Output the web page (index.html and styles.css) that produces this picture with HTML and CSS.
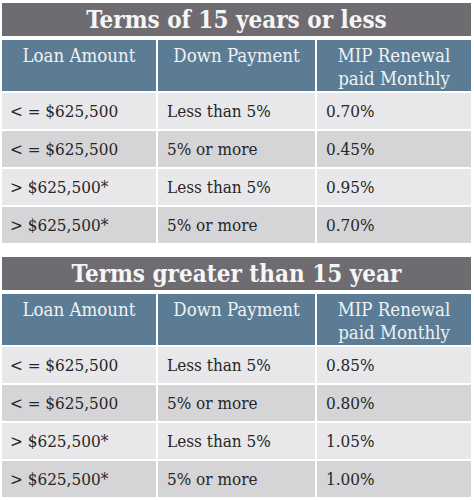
FILE: index.html
```html
<!DOCTYPE html>
<html>
<head>
<meta charset="utf-8">
<link rel="stylesheet" href="styles.css">
</head>
<body>
<div class="page">
  <section class="block">
    <div class="title">Terms of 15 years or less</div>
    <div class="grid">
      <div class="hd">Loan Amount</div>
      <div class="hd">Down Payment</div>
      <div class="hd">MIP Renewal<br>paid Monthly</div>
      <div class="c l">&lt; = $625,500</div>
      <div class="c l">Less than 5%</div>
      <div class="c l">0.70%</div>
      <div class="c d">&lt; = $625,500</div>
      <div class="c d">5% or more</div>
      <div class="c d">0.45%</div>
      <div class="c l">&gt; $625,500*</div>
      <div class="c l">Less than 5%</div>
      <div class="c l">0.95%</div>
      <div class="c d">&gt; $625,500*</div>
      <div class="c d">5% or more</div>
      <div class="c d">0.70%</div>
    </div>
  </section>
  <section class="block second">
    <div class="title">Terms greater than 15 year</div>
    <div class="grid">
      <div class="hd">Loan Amount</div>
      <div class="hd">Down Payment</div>
      <div class="hd">MIP Renewal<br>paid Monthly</div>
      <div class="c l">&lt; = $625,500</div>
      <div class="c l">Less than 5%</div>
      <div class="c l">0.85%</div>
      <div class="c d">&lt; = $625,500</div>
      <div class="c d">5% or more</div>
      <div class="c d">0.80%</div>
      <div class="c l">&gt; $625,500*</div>
      <div class="c l">Less than 5%</div>
      <div class="c l">1.05%</div>
      <div class="c d">&gt; $625,500*</div>
      <div class="c d">5% or more</div>
      <div class="c d">1.00%</div>
    </div>
  </section>
</div>
</body>
</html>
```
FILE: styles.css
```css
html, body {
  margin: 0;
  padding: 0;
  background: #ffffff;
}
.page {
  padding: 3px 3px 0 2px;
  width: 469px;
  font-family: "DejaVu Serif", "Liberation Serif", serif;
  font-stretch: condensed;
}
.block.second {
  margin-top: 14px;
}
.title {
  height: 33px;
  background: #6e6c71;
  color: #f6f6f6;
  font-weight: bold;
  font-size: 24px;
  line-height: 34px;
  text-align: center;
}
.grid {
  margin-top: 4px;
  display: grid;
  grid-template-columns: 154px 157px 154px;
  column-gap: 2px;
  row-gap: 2px;
}
.hd {
  background: #5b7c94;
  color: #eef2f5;
  font-size: 18.5px;
  line-height: 23px;
  text-align: center;
  height: 51px;
  padding-top: 4px;
  box-sizing: border-box;
}
.c {
  height: 36px;
  line-height: 36px;
  font-size: 17px;
  color: #262626;
  padding-left: 9px;
}
.c.l {
  background: #e8e8ea;
}
.c.d {
  background: #d5d5d7;
}
.grid .c:nth-child(3n+1) {
  padding-left: 8px;
}
```
